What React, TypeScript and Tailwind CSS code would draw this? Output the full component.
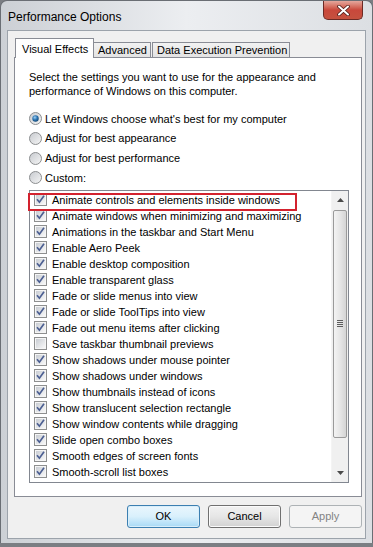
import React from "react";

const effects: [string, boolean][] = [
  ["Animate controls and elements inside windows", true],
  ["Animate windows when minimizing and maximizing", true],
  ["Animations in the taskbar and Start Menu", true],
  ["Enable Aero Peek", true],
  ["Enable desktop composition", true],
  ["Enable transparent glass", true],
  ["Fade or slide menus into view", true],
  ["Fade or slide ToolTips into view", true],
  ["Fade out menu items after clicking", true],
  ["Save taskbar thumbnail previews", false],
  ["Show shadows under mouse pointer", true],
  ["Show shadows under windows", true],
  ["Show thumbnails instead of icons", true],
  ["Show translucent selection rectangle", true],
  ["Show window contents while dragging", true],
  ["Slide open combo boxes", true],
  ["Smooth edges of screen fonts", true],
  ["Smooth-scroll list boxes", true],
];

const radios = [
  "Let Windows choose what's best for my computer",
  "Adjust for best appearance",
  "Adjust for best performance",
  "Custom:",
];

function CheckBox({ checked }: { checked: boolean }) {
  return (
    <svg width="13" height="13" viewBox="0 0 13 13" className="shrink-0">
      <defs>
        <linearGradient id="cbFill" x1="0" y1="0" x2="1" y2="1">
          <stop offset="0" stopColor="#c9cdd3" />
          <stop offset="1" stopColor="#f8f8f8" />
        </linearGradient>
      </defs>
      <rect x="0.5" y="0.5" width="12" height="12" fill="#f5f5f5" stroke="#8e8f8f" />
      <rect x="2" y="2" width="9" height="9" fill="url(#cbFill)" />
      {checked && (
        <path d="M3 6.3 L5.4 9.2 L10 2.8" fill="none" stroke="#4c5f92" strokeWidth="1.7" />
      )}
    </svg>
  );
}

function Radio({ checked }: { checked: boolean }) {
  return (
    <svg width="13" height="13" viewBox="0 0 13 13" className="shrink-0">
      <defs>
        <linearGradient id="rdFill" x1="0" y1="0" x2="1" y2="1">
          <stop offset="0" stopColor="#c6c9ce" />
          <stop offset="1" stopColor="#f6f6f6" />
        </linearGradient>
        <radialGradient id="rdDot" cx="0.4" cy="0.35" r="0.7">
          <stop offset="0" stopColor="#9fd1f4" />
          <stop offset="0.5" stopColor="#2f77b5" />
          <stop offset="1" stopColor="#11446f" />
        </radialGradient>
      </defs>
      <circle cx="6.5" cy="6.5" r="6" fill="url(#rdFill)" stroke="#8c8e90" />
      {checked && <circle cx="6.5" cy="6.5" r="3.2" fill="url(#rdDot)" />}
    </svg>
  );
}

function Scrollbar() {
  return (
    <div className="w-[17px] shrink-0 flex flex-col bg-[#f0f0f0] border-l border-[#f4f4f4]">
      <div className="h-[19px] flex items-center justify-center">
        <svg width="7" height="4" viewBox="0 0 7 4">
          <path d="M0 4 L3.5 0 L7 4 Z" fill="#4a4a4a" />
        </svg>
      </div>
      <div className="h-[228px] mx-[1px] rounded-[2px] border border-[#9a9a9a] bg-gradient-to-r from-[#f3f3f3] via-[#e6e6e6] to-[#d5d5d5] flex items-center justify-center">
        <div className="flex flex-col gap-[1px]">
          <div className="w-[6px] h-px bg-[#5d5d5d]" />
          <div className="w-[6px] h-px bg-[#5d5d5d]" />
          <div className="w-[6px] h-px bg-[#5d5d5d]" />
          <div className="w-[6px] h-px bg-[#5d5d5d]" />
        </div>
      </div>
      <div className="flex-1" />
      <div className="h-[17px] flex items-center justify-center">
        <svg width="7" height="4" viewBox="0 0 7 4">
          <path d="M0 0 L3.5 4 L7 0 Z" fill="#4a4a4a" />
        </svg>
      </div>
    </div>
  );
}

export default function App() {
  return (
    <div className="w-[373px] h-[547px] bg-[#7b7e83] font-['Liberation_Sans',Arial,sans-serif] text-[11px] text-black overflow-hidden">
      <div className="h-[543px] rounded-t-[7px] border-t border-x border-[#6a6e74] bg-gradient-to-r from-[#ccd0d5] via-[#eceef1] to-[#dcdfe3] flex flex-col">
        <div className="h-[29px] flex justify-between items-start">
          <div className="pl-[7px] pt-[8px] text-[12px] leading-[16px]">Performance Options</div>
          <div className="mr-[9px] w-[40px] h-[19px] rounded-b-[5px] border border-t-0 border-[#6b2a25] bg-gradient-to-b from-[#e4a79d] via-[#c9483b] to-[#c5513f] flex items-center justify-center">
            <svg width="13" height="11" viewBox="0 0 13 11">
              <path d="M2 1.5 L11 9.5 M11 1.5 L2 9.5" stroke="#4a1a16" strokeWidth="3.6" strokeLinecap="round" />
              <path d="M2 1.5 L11 9.5 M11 1.5 L2 9.5" stroke="#ffffff" strokeWidth="2" strokeLinecap="round" />
            </svg>
          </div>
        </div>

        <div className="mx-[6px] h-[509px] border border-[#9ca3ab] bg-[#f0f0f0] flex flex-col">
          <div className="pt-[7px] pl-[6px] pr-[3px]">
            <div className="flex items-end h-[19px] pl-[1px]">
              <div className="relative z-10 -mb-px h-[20px] w-[79px] border border-b-0 border-[#898c95] bg-white pl-[6px] pt-[3px] leading-[14px] whitespace-nowrap">
                Visual Effects
              </div>
              <div className="h-[15px] w-[57px] border border-l-0 border-b-0 border-[#898c95] bg-gradient-to-b from-[#f2f2f2] to-[#e3e3e3] pl-[4px] leading-[14px] whitespace-nowrap">
                Advanced
              </div>
              <div className="ml-[1px] h-[15px] w-[138px] border border-b-0 border-[#898c95] bg-gradient-to-b from-[#f2f2f2] to-[#e3e3e3] pl-[4px] leading-[14px] whitespace-nowrap">
                Data Execution Prevention
              </div>
            </div>

            <div className="h-[440px] border border-[#898c95] bg-white pl-[14px] pt-[12px]">
              <p className="leading-[14px] whitespace-nowrap">
                Select the settings you want to use for the appearance and
                <br />
                performance of Windows on this computer.
              </p>

              <div className="mt-[11px] flex flex-col">
                {radios.map((r, i) => (
                  <div key={r} className="h-[19.7px] flex items-center gap-[3px] whitespace-nowrap">
                    <Radio checked={i === 0} />
                    <span>{r}</span>
                  </div>
                ))}
              </div>

              <div className="relative mt-[2px] w-[320px] h-[293px] border border-[#828790] flex">
                <div className="flex-1 pt-[1px] pl-[4px]">
                  {effects.map(([label, on]) => (
                    <div key={label} className="h-[16px] flex items-center gap-[5px] whitespace-nowrap">
                      <CheckBox checked={on} />
                      <span>{label}</span>
                    </div>
                  ))}
                </div>
                <Scrollbar />
                <div className="absolute left-[-2px] top-[2px] w-[269px] h-[18px] border-2 border-[#d3222e]" />
              </div>
            </div>
          </div>

          <div className="mt-[8px] pr-[3px] flex justify-end gap-[8px]">
            <button className="w-[73px] h-[23px] rounded-[3px] border border-[#3c7fb1] bg-gradient-to-b from-[#eaf6fd] via-[#d9f0fc] to-[#a7d9f5] shadow-[inset_0_0_0_1px_#d8eefa]">
              OK
            </button>
            <button className="w-[73px] h-[23px] rounded-[3px] border border-[#707070] bg-gradient-to-b from-[#f2f2f2] via-[#e6e6e6] to-[#d2d2d2] shadow-[inset_0_0_0_1px_#fbfbfb]">
              Cancel
            </button>
            <button className="w-[73px] h-[23px] rounded-[3px] border border-[#adb2b5] bg-[#f4f4f4] text-[#838383]">
              Apply
            </button>
          </div>
        </div>
      </div>
    </div>
  );
}
